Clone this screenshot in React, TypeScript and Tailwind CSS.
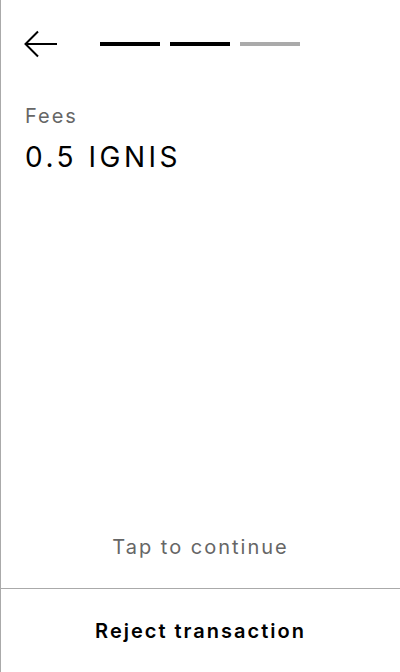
import React from "react";

export default function App() {
  return (
    <div
      className="h-[672px] w-[400px] bg-white border-l border-[#aaaaaa] flex flex-col"
      style={{ fontFamily: "Inter, 'Noto Sans', sans-serif" }}
    >
      <div className="pt-[30px] pl-[23px] flex items-center h-[58px]">
        <svg width="34" height="28" viewBox="0 0 34 28" fill="none" className="shrink-0">
          <path d="M1.5 14 H33" stroke="#000" strokeWidth="2" />
          <path d="M14 1.5 L1.5 14 L14 26.5" stroke="#000" strokeWidth="2" fill="none" />
        </svg>
        <div className="flex items-center gap-[10px] ml-[42px]">
          <div className="w-[60px] h-[4px] bg-black" />
          <div className="w-[60px] h-[4px] bg-black" />
          <div className="w-[60px] h-[4px] bg-[#aaaaaa]" />
        </div>
      </div>
      <div className="px-[24px] mt-[44px] flex-1">
        <div className="text-[20px] leading-[28px] tracking-[2px] text-[#666666]">Fees</div>
        <div className="mt-[9px] text-[28px] leading-[36px] tracking-[3.5px] text-black">0.5 IGNIS</div>
      </div>
      <div className="text-center text-[20px] leading-[28px] tracking-[2px] text-[#666666] pb-[27px]">
        Tap to continue
      </div>
      <div className="border-t border-[#aaaaaa] h-[84px] flex items-center justify-center">
        <span className="text-[20px] font-semibold tracking-[2px] text-black">Reject transaction</span>
      </div>
    </div>
  );
}
